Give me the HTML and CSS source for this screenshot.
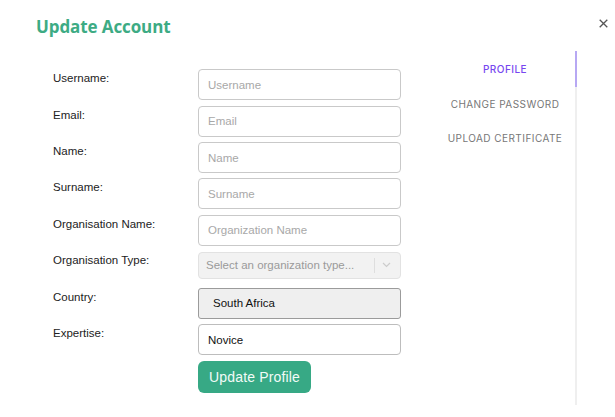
FILE: index.html
```html
<!DOCTYPE html>
<html lang="en">
<head>
<meta charset="utf-8">
<title>Update Account</title>
<link rel="stylesheet" href="styles.css">
</head>
<body>
<div class="modal">
  <header class="modal-header">
    <h1 class="title">Update Account</h1>
    <button class="close" aria-label="Close">
      <svg width="9" height="9" viewBox="0 0 9 9"><path d="M0.7 0.7 L8.3 8.3 M8.3 0.7 L0.7 8.3" stroke="#555" stroke-width="1.3" fill="none"/></svg>
    </button>
  </header>
  <div class="modal-body">
    <form class="form">
      <label class="label">Username:</label>
      <input class="field" placeholder="Username">
      <label class="label">Email:</label>
      <input class="field" placeholder="Email">
      <label class="label">Name:</label>
      <input class="field" placeholder="Name">
      <label class="label">Surname:</label>
      <input class="field" placeholder="Surname">
      <label class="label">Organisation Name:</label>
      <input class="field" placeholder="Organization Name">
      <label class="label">Organisation Type:</label>
      <div class="select-box">
        <span class="select-text">Select an organization type...</span>
        <span class="select-sep"></span>
        <svg class="chev" width="9" height="6" viewBox="0 0 9 6"><path d="M1 1 L4.5 4.5 L8 1" stroke="#ccc" stroke-width="1.2" fill="none"/></svg>
      </div>
      <label class="label">Country:</label>
      <div class="country">South Africa</div>
      <label class="label">Expertise:</label>
      <input class="field filled" value="Novice">
      <span></span>
      <div class="actions"><button type="button" class="btn">Update Profile</button></div>
    </form>
    <nav class="tabs">
      <div class="tab active">PROFILE</div>
      <div class="tab">CHANGE PASSWORD</div>
      <div class="tab">UPLOAD CERTIFICATE</div>
    </nav>
  </div>
</div>
</body>
</html>
```
FILE: styles.css
```css
* { box-sizing: border-box; }
html, body { margin: 0; padding: 0; background: #fff; }
body { font-family: "Liberation Sans", Arial, sans-serif; width: 615px; height: 417px; overflow: hidden; }

.modal { width: 615px; }

.modal-header {
  height: 51px;
  display: flex;
  justify-content: space-between;
  align-items: flex-start;
  padding: 15px 0 0 36px;
}
.title {
  margin: 0;
  font-family: "Open Sans", sans-serif;
  font-weight: 700;
  font-size: 17px;
  line-height: 24px;
  color: #3dab84;
  letter-spacing: -0.1px;
}
.close {
  border: 0;
  background: none;
  padding: 0;
  margin: 4px 7px 0 0;
  width: 9px;
  height: 9px;
  display: flex;
}

.modal-body {
  display: flex;
  padding-left: 53px;
  gap: 34px;
  height: 360px;
}

.form {
  width: 348px;
  padding-top: 18.3px;
  display: grid;
  grid-template-columns: 145px 203px;
  grid-auto-rows: 31px;
  row-gap: 5.4px;
  align-content: start;
}
.label {
  font-size: 11.5px;
  line-height: 13px;
  color: #222;
  padding-top: 3px;
}
.field {
  height: 31px;
  border: 1px solid #c9c9c9;
  border-radius: 4px;
  padding: 0 9px;
  font-family: "Liberation Sans", Arial, sans-serif;
  font-size: 11.5px;
  color: #111;
  outline: none;
}
.field::placeholder { color: #a8a8a8; }
.field.filled { border-color: #bdbdbd; }

.select-box {
  height: 27px;
  align-self: start;
  margin-top: 0.5px;
  background: #f2f2f2;
  border: 1px solid #e2e2e2;
  border-radius: 4px;
  display: flex;
  align-items: center;
  padding: 0 0 0 7px;
  font-size: 11.5px;
  color: #9a9a9a;
}
.select-text { flex: 1; }
.select-sep { width: 1px; height: 15px; background: #dedede; margin-right: 7px; }
.chev { margin-right: 9px; }

.country {
  height: 31px;
  background: #efefef;
  border: 1px solid #9b9b9b;
  border-radius: 3px;
  display: flex;
  align-items: center;
  padding-left: 14px;
  font-size: 11.5px;
  color: #111;
}

.actions { padding-top: 0.6px; }
.btn {
  height: 31.5px;
  width: 113px;
  border: 0;
  border-radius: 6px;
  background: #37a985;
  color: #f2fbf7;
  font-family: "Liberation Sans", Arial, sans-serif;
  font-size: 14px;
  letter-spacing: 0.15px;
  padding: 0;
}

.tabs {
  width: 142px;
  border-right: 2px solid #efefef;
  margin-bottom: 6px;
  position: relative;
  display: flex;
  flex-direction: column;
}
.tab {
  height: 34.4px;
  display: flex;
  align-items: center;
  justify-content: center;
  font-family: Inter, "Open Sans", sans-serif;
  font-size: 10px;
  letter-spacing: 0.45px;
  color: #777;
  padding-top: 2px;
}
.tab.active {
  color: #7747f0;
  font-weight: 500;
}
.tab.active::after {
  content: "";
  position: absolute;
  right: -2px;
  top: 0;
  width: 2px;
  height: 36px;
  background: #b7a8f3;
}
```
